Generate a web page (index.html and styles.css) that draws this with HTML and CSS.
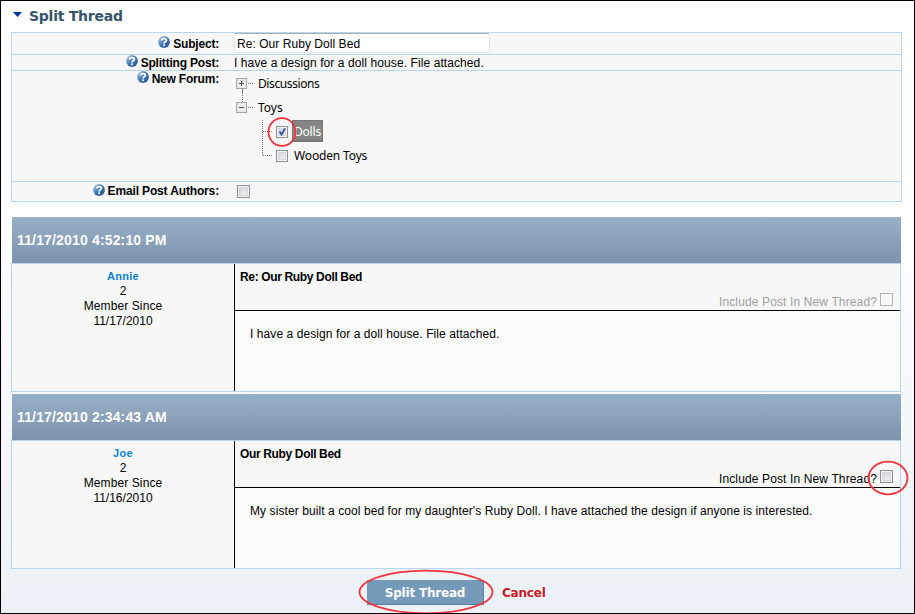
FILE: index.html
```html
<!DOCTYPE html>
<html lang="en">
<head>
<meta charset="utf-8">
<title>Split Thread</title>
<link rel="stylesheet" href="styles.css">
</head>
<body>
<svg class="defs" width="0" height="0" aria-hidden="true">
  <defs>
    <linearGradient id="ball" x1="0" y1="0" x2="1" y2="1">
      <stop offset="0" stop-color="#c3d8ee"/><stop offset=".5" stop-color="#4278b5"/><stop offset="1" stop-color="#1b4c88"/>
    </linearGradient>
    <symbol id="help" viewBox="0 0 12 12">
      <circle cx="6" cy="6" r="5.9" fill="url(#ball)"/>
      <path d="M3.7 4.500C3.800 2 8.500 1.900 8.400 4.400C8.300 5.900 6.100 5.700 6.100 7.400" fill="none" stroke="#fff" stroke-width="1.800"/>
      <rect x="5.200" y="8.400" width="1.800" height="1.700" fill="#fff"/>
    </symbol>
  </defs>
</svg>
<main class="page">
  <h1 class="title"><span class="arrow"></span><span class="title-text">Split Thread</span></h1>

  <section class="form">
    <div class="row row-subject">
      <div class="label"><svg class="help"><use href="#help"/></svg><span>Subject:</span></div>
      <div class="input"><span class="t-subject">Re: Our Ruby Doll Bed</span></div>
    </div>
    <div class="row row-post">
      <div class="label"><svg class="help"><use href="#help"/></svg><span>Splitting Post:</span></div>
      <div class="value">I have a design for a doll house. File attached.</div>
    </div>
    <div class="row row-forum">
      <div class="label"><svg class="help"><use href="#help"/></svg><span>New Forum:</span></div>
      <div class="tree">
        <svg class="tree-lines" width="60" height="90" viewBox="0 0 60 90">
          <g fill="none" stroke="#777" stroke-dasharray="1 1">
            <path d="M14 12.500H20M14 36.500H20M28.500 49V84M29 60.500H39M29 84.500H39"/>
            <path d="M8.500 24V31"/>
          </g>
          <path d="M8.500 18V23" stroke="#777"/>
          <g stroke="#a6a6a6">
            <rect x="2.500" y="7.500" width="10" height="10" fill="#eaeaea"/>
            <rect x="2.500" y="31.500" width="10" height="10" fill="#eaeaea"/>
          </g>
          <path d="M5 12.500H10M7.500 10V15M5 36.500H10" stroke="#555"/>
        </svg>
        <div class="node"><span class="n-disc">Discussions</span></div>
        <div class="node"><span class="n-toys">Toys</span></div>
        <div class="node child"><span class="check checked"><svg width="10" height="10" viewBox="0 0 10 10"><path d="M2.500 4.500L4.500 7.500L8 1.500" fill="none" stroke="#35509b" stroke-width="1.800"/></svg></span><span class="selected">Dolls</span></div>
        <div class="node child"><span class="check"></span><span class="n-wood">Wooden Toys</span></div>
        <svg class="ring ring-dolls" width="30" height="30"><ellipse cx="15" cy="15" rx="13.500" ry="13.800"/></svg>
      </div>
    </div>
    <div class="row row-email">
      <div class="label"><svg class="help"><use href="#help"/></svg><span>Email Post Authors:</span></div>
      <span class="check box"></span>
    </div>
  </section>

  <article class="post">
    <header class="post-date">11/17/2010 4:52:10 PM</header>
    <div class="post-main">
      <aside class="author"><b>Annie</b><span>2</span><span class="since">Member Since</span><span>11/17/2010</span></aside>
      <div class="content">
        <div class="head">
          <h2>Re: Our Ruby Doll Bed</h2>
          <div class="include disabled"><span class="inc-text">Include Post In New Thread?</span><span class="check box"></span></div>
        </div>
        <p>I have a design for a doll house. File attached.</p>
      </div>
    </div>
  </article>

  <article class="post">
    <header class="post-date">11/17/2010 2:34:43 AM</header>
    <div class="post-main">
      <aside class="author"><b>Joe</b><span>2</span><span class="since">Member Since</span><span>11/16/2010</span></aside>
      <div class="content">
        <div class="head">
          <h2>Our Ruby Doll Bed</h2>
          <div class="include"><span class="inc-text">Include Post In New Thread?</span><span class="check box"></span>
            <svg class="ring ring-include" width="42" height="36"><ellipse cx="21" cy="18" rx="19.500" ry="16.300"/></svg>
          </div>
        </div>
        <p>My sister built a cool bed for my daughter's Ruby Doll. I have attached the design if anyone is interested.</p>
      </div>
    </div>
  </article>

  <footer class="actions">
    <div class="submit"><span>Split Thread</span>
      <svg class="ring ring-submit" width="138" height="46"><ellipse cx="69" cy="23" rx="66.500" ry="21.300"/></svg>
    </div>
    <span class="cancel">Cancel</span>
  </footer>
</main>
</body>
</html>
```
FILE: styles.css
```css
* { box-sizing: border-box; }
body { margin: 0; font: 12px/15px "Liberation Sans", Arial, sans-serif; color: #000; }
.defs { position: absolute; }
.page {
  width: 915px; height: 614px; overflow: hidden; padding: 0 0 0 10px;
  border: 1px solid #000;
  background: linear-gradient(#fff 180px, #f9fbfe 300px, #f2f6fa 480px, #ebf1f6 612px);
}
span, b, .value, h2, p { white-space: nowrap; }

.title { display: flex; height: 31px; margin: 0; font: bold 14px/31px "DejaVu Sans", Verdana, sans-serif; color: #36546b; }
.arrow { width: 9px; height: 5px; margin: 11px 7px 0 2px; background: #003399; clip-path: polygon(0 0, 100% 0, 50% 100%); }
.title-text { letter-spacing: -.25px; }

.form { width: 891px; border: 1px solid #b5d6f0; background: #f7f7f7; }
.row { display: flex; }
.row + .row { border-top: 1px solid #b5d6f0; }
.row-subject { height: 21px; }
.row-post { height: 16px; }
.row-forum { height: 111px; }
.row-email { height: 20px; }
.label { display: flex; justify-content: flex-end; width: 207px; margin-right: 15px; font-weight: bold; letter-spacing: -.2px; }
.label span { padding-top: 1px; }
.row-subject .label { padding-top: 3px; }
.row-email .label { padding-top: 2px; }
.row-email .label span { letter-spacing: -.15px; padding-top: 0; }
.help { width: 12px; height: 12px; margin-right: 3px; }
.value { padding-top: 1px; letter-spacing: .09px; }
.input { width: 256px; height: 20px; padding: 0 2px; line-height: 20px; letter-spacing: .05px; background: #fff; border: 1px solid #e1e4ea; border-top-color: #abadb3; border-radius: 2px; }
.row-email .box { margin: 3px 0 0 3px; }

.tree { position: relative; padding-top: 1px; font: 12px/24px "Noto Sans", "Open Sans", sans-serif; }
.tree-lines { position: absolute; left: 0; top: 0; }
.node { display: flex; align-items: center; height: 24px; padding-left: 24px; }
.node.child { padding-left: 42px; }
.node .check { width: 12px; height: 12px; margin: -1px 4px 0 0; }
.n-disc { letter-spacing: -.4px; }
.selected { height: 22px; width: 31px; margin-top: -2px; padding-left: 1px; line-height: 22px; letter-spacing: -.2px; color: #fff; background: #858585; border: 1px solid #777; border-bottom: 2px solid #777; }
.node .n-wood { padding-left: 2px; letter-spacing: -.15px; }
.check { display: block; flex: none; width: 13px; height: 13px; border: 1px solid #8e8f8f; background: linear-gradient(135deg, #cbcfd5, #f6f6f6); box-shadow: inset 0 0 0 1px #f4f4f4, inset 0 0 0 2px #d3d6da; }
.check svg { display: block; }

.post { width: 890px; margin-top: 15px; }
.post + .post { margin-top: 2px; }
.post-date { height: 46px; margin-left: 1px; padding-left: 5px; font: bold 14px/46px "Liberation Sans", Arial, sans-serif; letter-spacing: .16px; color: #fff; background: linear-gradient(#98b1c7, #7d92ad); }
.post-main { display: flex; height: 129px; border: 1px solid #b5d6f0; background: #fcfcfc; }
.author { display: flex; flex-direction: column; align-items: center; width: 222px; padding-top: 5px; background: #f7f7f7; }
.author b { font-size: 11px; letter-spacing: .3px; color: #0a83cb; }
.since { letter-spacing: .1px; }
.content { flex: 1; border-left: 1px solid #000; }
.head { height: 47px; padding: 6px 7px 0 5px; border-bottom: 1px solid #000; background: #f7f7f7; }
h2 { margin: 0; font: inherit; font-weight: bold; letter-spacing: -.35px; }
.include { position: relative; display: flex; justify-content: flex-end; margin-top: 8px; }
.include .inc-text { padding-top: 2px; margin-right: 3px; letter-spacing: .13px; }
.disabled { color: #a0a0a0; }
.disabled .check { border-color: #b1b1b1; background: #f8f8f8; box-shadow: none; }
p { margin: 16px 0 0 15px; letter-spacing: .08px; }

.ring { position: absolute; fill: none; stroke: #f0353c; stroke-width: 1.8; pointer-events: none; }
.ring-dolls { left: 33px; top: 46px; }
.ring-include { right: -16px; top: -10px; }
.ring-submit { left: -10px; top: -11px; }

.actions { display: flex; margin: 11px 0 0 356px; font: bold 12px/26px "DejaVu Sans", Verdana, sans-serif; }
.submit { position: relative; width: 117px; height: 25px; text-align: center; color: #fff; background: #7499b9; border-right: 1px solid #5e7e99; border-bottom: 1px solid #5e7e99; }
.cancel { margin-left: 18px; color: #c61a28; }
.submit span, .cancel { letter-spacing: -.2px; }
```
